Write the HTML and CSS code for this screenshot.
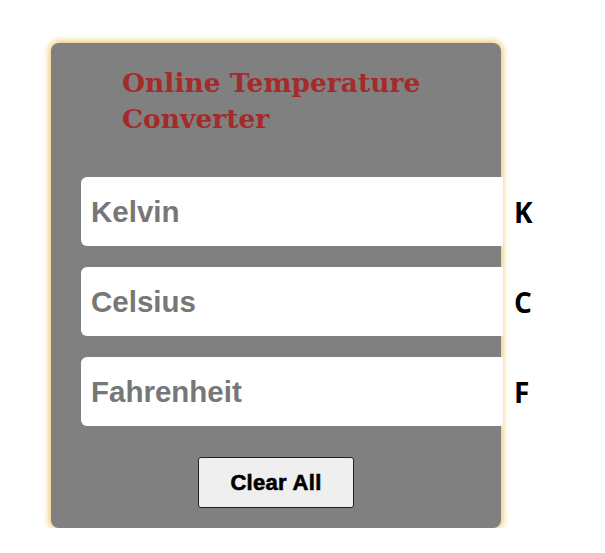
FILE: index.html
```html
<!DOCTYPE html>
<html>
<head>
<meta charset="utf-8">
<link rel="stylesheet" href="styles.css">
</head>
<body>
<div class="card">
  <h1 class="title">Online Temperature Converter</h1>
  <div class="rows">
    <div class="row"><input class="field" type="text" placeholder="Kelvin"><span class="unit">K</span></div>
    <div class="row"><input class="field" type="text" placeholder="Celsius"><span class="unit">C</span></div>
    <div class="row"><input class="field" type="text" placeholder="Fahrenheit"><span class="unit">F</span></div>
  </div>
  <div class="actions"><button class="clear" type="button">Clear All</button></div>
</div>
</body>
</html>
```
FILE: styles.css
```css
html, body { margin: 0; padding: 0; background: #fff; }
body { padding: 43px 0 0 51px; }
.card {
  width: 450px;
  height: 485px;
  box-sizing: border-box;
  background: #808080;
  border-radius: 8px;
  box-shadow: 0 0 6px 2px #ecc870;
  padding: 22px 0 0 30px;
}
.title {
  margin: 0 0 0 41px;
  font-family: "DejaVu Serif", "Liberation Serif", serif;
  font-weight: bold;
  font-size: 26.5px;
  line-height: 36px;
  color: #a52a2a;
  width: 330px;
}
.rows {
  margin-top: 40px;
  display: flex;
  flex-direction: column;
  gap: 21px;
}
.row { display: flex; align-items: center; width: max-content; }
.field {
  flex: none;
  width: 422px;
  height: 69px;
  box-sizing: border-box;
  border: none;
  border-radius: 6px 0 0 6px;
  background: #fff;
  padding: 0 10px;
  font-family: "Liberation Sans", Arial, sans-serif;
  font-weight: bold;
  font-size: 29.5px;
  outline: none;
}
.field::placeholder { color: #777; opacity: 1; }
.unit {
  flex: none;
  margin-left: 11px;
  font-family: "Open Sans", sans-serif;
  font-weight: bold;
  font-size: 28px;
  color: #000;
}
.actions { display: flex; padding-left: 117px; margin-top: 31px; }
.clear {
  width: 156px;
  height: 51px;
  background: #efefef;
  border: 1px solid #222;
  border-radius: 3px;
  font-family: "Liberation Sans", Arial, sans-serif;
  font-weight: bold;
  font-size: 22px;
  color: #000;
  -webkit-text-stroke: 0.6px #000;
  letter-spacing: 0.3px;
}
```
